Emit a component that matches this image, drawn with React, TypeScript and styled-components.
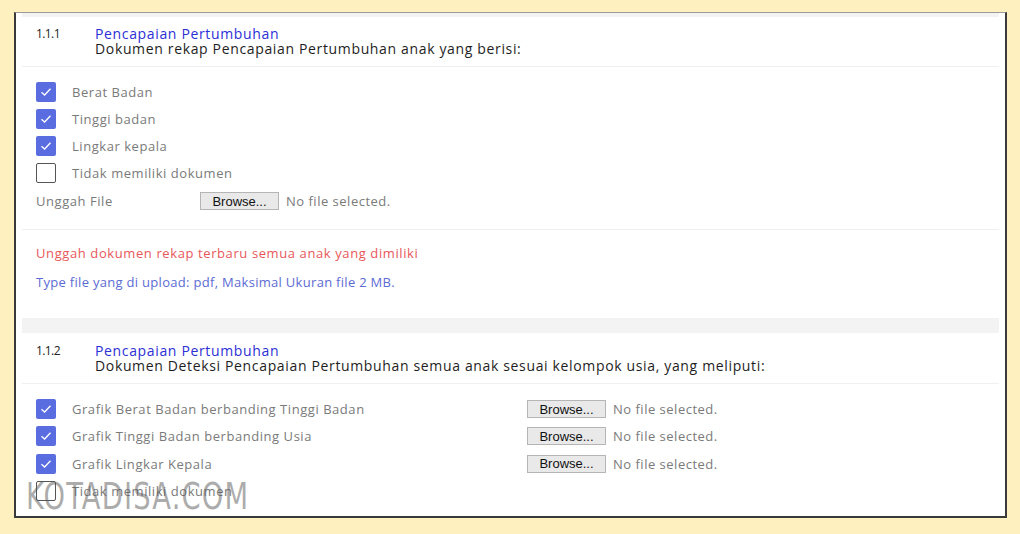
import React from 'react';
import styled, { createGlobalStyle } from 'styled-components';

const GlobalStyle = createGlobalStyle`
  html, body {
    margin: 0;
    padding: 0;
    background: #fff0c0;
  }
  body {
    font-family: "Open Sans", "Noto Sans", sans-serif;
  }
`;

type Item = { label: string; checked: boolean; withFile?: boolean };

const firstItems: Item[] = [
  { label: 'Berat Badan', checked: true },
  { label: 'Tinggi badan', checked: true },
  { label: 'Lingkar kepala', checked: true },
  { label: 'Tidak memiliki dokumen', checked: false },
];

const secondItems: Item[] = [
  { label: 'Grafik Berat Badan berbanding Tinggi Badan', checked: true, withFile: true },
  { label: 'Grafik Tinggi Badan berbanding Usia', checked: true, withFile: true },
  { label: 'Grafik Lingkar Kepala', checked: true, withFile: true },
  { label: 'Tidak memiliki dokumen', checked: false },
];

const Checkbox: React.FC<{ checked: boolean }> = ({ checked }) => (
  <Box $checked={checked}>
    {checked && (
      <svg width="14" height="14" viewBox="0 0 14 14">
        <path d="M2.5 7.2 L5.6 10 L11.5 3.8" fill="none" stroke="#fff" strokeWidth="1.3" />
      </svg>
    )}
  </Box>
);

const FileInput: React.FC = () => (
  <FileWrap>
    <BrowseButton>Browse...</BrowseButton>
    <FileStatus>No file selected.</FileStatus>
  </FileWrap>
);

export default function App() {
  return (
    <>
      <GlobalStyle />
      <Frame>
        <Band $height={4} />
        <Card>
          <Header $top={9} $bottom={10}>
            <Number>1.1.1</Number>
            <TitleBlock>
              <Title>Pencapaian Pertumbuhan</Title>
              <Subtitle>Dokumen rekap Pencapaian Pertumbuhan anak yang berisi:</Subtitle>
            </TitleBlock>
          </Header>
          <Body $top={15} $bottom={18}>
            {firstItems.map((item) => (
              <Row key={item.label}>
                <Checkbox checked={item.checked} />
                <Label>{item.label}</Label>
              </Row>
            ))}
            <UploadRow>
              <Label>Unggah File</Label>
              <FileInput />
            </UploadRow>
          </Body>
          <Notes>
            <Note $color="#e8575a" $spacing={0.6}>
              Unggah dokumen rekap terbaru semua anak yang dimiliki
            </Note>
            <Note $color="#5c6bd4" $spacing={0.3}>
              Type file yang di upload: pdf, Maksimal Ukuran file 2 MB.
            </Note>
          </Notes>
        </Card>
        <Band $height={15} />
        <Card>
          <Header $top={10} $bottom={10}>
            <Number>1.1.2</Number>
            <TitleBlock>
              <Title>Pencapaian Pertumbuhan</Title>
              <Subtitle>
                Dokumen Deteksi Pencapaian Pertumbuhan semua anak sesuai kelompok usia, yang meliputi:
              </Subtitle>
            </TitleBlock>
          </Header>
          <Body $top={15} $bottom={16} $gap={7.3}>
            {secondItems.map((item) => (
              <GridRow key={item.label}>
                <Checkbox checked={item.checked} />
                <Label>{item.label}</Label>
                {item.withFile && <FileInput />}
              </GridRow>
            ))}
          </Body>
        </Card>
        <Watermark>KOTADISA.COM</Watermark>
      </Frame>
    </>
  );
}

const Frame = styled.div`
  position: relative;
  box-sizing: border-box;
  width: 993px;
  height: 506px;
  margin: 12px 0 0 14px;
  background: #fff;
  border-top: 1px solid #9a9a9a;
  border-left: 2px solid #3a3a3a;
  border-right: 2px solid #3a3a3a;
  border-bottom: 2px solid #3a3a3a;
  padding: 0 6px;
  overflow: hidden;
`;

const Band = styled.div<{ $height: number }>`
  height: ${({ $height }) => $height}px;
  background: #f3f3f3;
`;

const Card = styled.div`
  background: #fff;
`;

const Header = styled.div<{ $top: number; $bottom: number }>`
  display: flex;
  padding: ${({ $top }) => $top}px 12px ${({ $bottom }) => $bottom}px 14px;
  border-bottom: 1px solid #f0f0f0;
`;

const Number = styled.div`
  width: 59px;
  font-size: 12px;
  line-height: 16px;
  color: #222;
  letter-spacing: -0.6px;
`;

const TitleBlock = styled.div`
  display: flex;
  flex-direction: column;
`;

const Title = styled.div`
  font-size: 14px;
  line-height: 15px;
  letter-spacing: 0.65px;
  color: #2b2fd6;
`;

const Subtitle = styled.div`
  font-size: 14px;
  line-height: 15px;
  letter-spacing: 0.65px;
  color: #1e1e1e;
`;

const Body = styled.div<{ $top: number; $bottom: number; $gap?: number }>`
  display: flex;
  flex-direction: column;
  gap: ${({ $gap }) => $gap ?? 7}px;
  padding: ${({ $top }) => $top}px 14px ${({ $bottom }) => $bottom}px 14px;
  border-bottom: 1px solid #f0f0f0;
`;

const Row = styled.div`
  display: flex;
  align-items: center;
  gap: 16px;
  height: 20px;
`;

const GridRow = styled.div`
  display: grid;
  grid-template-columns: 20px 439px auto;
  column-gap: 16px;
  align-items: center;
  height: 20px;
`;

const UploadRow = styled.div`
  display: grid;
  grid-template-columns: 164px auto;
  align-items: center;
  height: 20px;
  margin-top: 1px;
`;

const Box = styled.div<{ $checked: boolean }>`
  box-sizing: border-box;
  width: 20px;
  height: 20px;
  border-radius: 2px;
  display: flex;
  align-items: center;
  justify-content: center;
  background: ${({ $checked }) => ($checked ? '#5a6de0' : '#fff')};
  border: ${({ $checked }) => ($checked ? 'none' : '1.5px solid #555')};
`;

const Label = styled.span`
  font-size: 13px;
  letter-spacing: 0.55px;
  color: #7a7a7a;
`;

const FileWrap = styled.div`
  display: flex;
  align-items: center;
  gap: 7px;
`;

const BrowseButton = styled.button`
  box-sizing: border-box;
  width: 79px;
  height: 18px;
  padding: 0;
  background: #e9e9e9;
  border: 1px solid #b5b5b5;
  border-radius: 0;
  font-family: "Liberation Sans", Arial, sans-serif;
  font-size: 13px;
  color: #111;
`;

const FileStatus = styled.span`
  font-size: 13px;
  letter-spacing: 0.5px;
  color: #7a7a7a;
`;

const Notes = styled.div`
  display: flex;
  flex-direction: column;
  gap: 13px;
  padding: 15px 14px 28px 14px;
`;

const Note = styled.div<{ $color: string; $spacing: number }>`
  font-size: 13px;
  line-height: 16px;
  letter-spacing: ${({ $spacing }) => $spacing}px;
  color: ${({ $color }) => $color};
`;

const Watermark = styled.div`
  position: absolute;
  left: 10px;
  top: 463px;
  font-family: "DejaVu Sans Condensed", "DejaVu Sans", sans-serif;
  font-size: 38px;
  line-height: 40px;
  letter-spacing: 1.5px;
  color: rgba(90, 90, 90, 0.5);
  transform: scaleX(0.8);
  transform-origin: left center;
  pointer-events: none;
`;
